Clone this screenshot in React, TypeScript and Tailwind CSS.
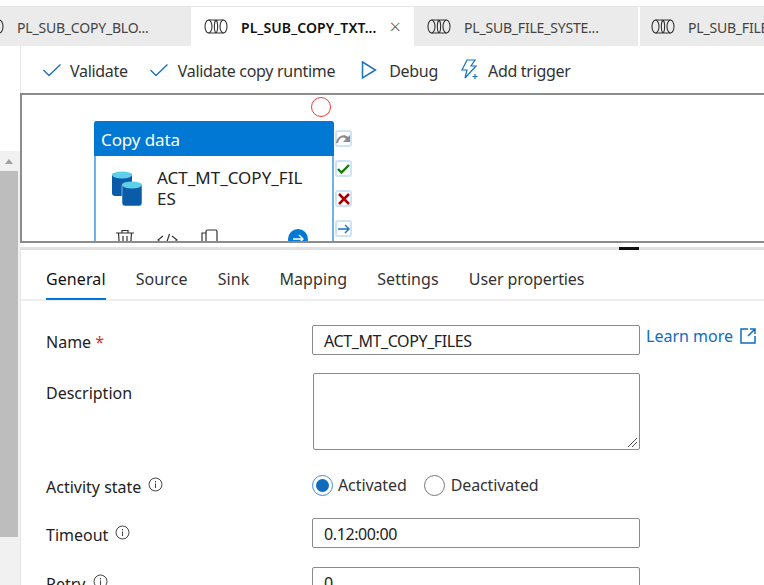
function TabIcon({ className }: { className?: string }) {
  return (
    <svg width="24" height="15" viewBox="0 0 24 15" fill="none" stroke="#333" strokeWidth="1.1" className={`shrink-0 ${className ?? ''}`}>
      <ellipse cx="4.5" cy="7.5" rx="3.500" ry="6.500" />
      <ellipse cx="19.5" cy="7.5" rx="3.500" ry="6.500" />
      <path d="M4.500 1h15M4.500 14h15M12 1c2.200 2 2.200 11 0 13M12 1c-2.200 2-2.200 11 0 13" />
    </svg>
  );
}

function Tab({ label, active, className }: { label: string; active?: boolean; className: string }) {
  return (
    <div className={`flex items-center shrink-0 h-full overflow-hidden ${active ? 'bg-white' : 'bg-[#ebebeb]'} ${className}`}>
      <TabIcon />
      <span className={`ml-[13px] pt-[2px] text-[14px] whitespace-nowrap ${active ? 'text-[#111] font-semibold tracking-[0.1px]' : 'text-[#444] tracking-[-0.2px]'}`}>{label}</span>
      {active && <span className="ml-[13px] text-[#666] text-[20px] leading-none font-light">×</span>}
    </div>
  );
}

function ToolItem({ icon, label, gap }: { icon: React.ReactNode; label: string; gap: string }) {
  return (
    <div className={`flex items-center ${gap}`}>
      {icon}
      <span className="pt-[3px] text-[16px] tracking-[-0.3px] text-[#333] whitespace-nowrap">{label}</span>
    </div>
  );
}

const check = (
  <svg width="18" height="14" viewBox="0 0 18 14" fill="none" stroke="#1a73c0" strokeWidth="1.4" className="shrink-0">
    <path d="M0.500 7l5.500 5.500L17.500 1.500" />
  </svg>
);

function SideBtn({ children }: { children: React.ReactNode }) {
  return (
    <div className="w-[17px] h-[17px] bg-white border-2 border-[#cfe3f7] rounded-[3px] flex items-center justify-center">
      {children}
    </div>
  );
}

function Info() {
  return (
    <svg width="15" height="15" viewBox="0 0 15 15" fill="none" stroke="#444" strokeWidth="1" className="shrink-0 -mt-[6px]">
      <circle cx="7.500" cy="7.500" r="6.500" />
      <path d="M7.500 6.500v4.500M7.500 4v1.400" />
    </svg>
  );
}

function Label({ children, className }: { children: React.ReactNode; className?: string }) {
  return <div className={`w-[266px] shrink-0 flex items-center gap-[7px] text-[16px] text-[#222] ${className ?? ''}`}>{children}</div>;
}

function Input({ value }: { value: string }) {
  return (
    <div className="w-[328px] h-[30px] border border-[#8a8a8a] rounded-[2px] pl-[11px] pt-[2px] flex items-center text-[16px] tracking-[-0.4px] text-[#222] shrink-0">
      {value}
    </div>
  );
}

export default function App() {
  return (
    <div className="w-[764px] h-[585px] overflow-hidden bg-white flex flex-col font-['Noto_Sans',sans-serif]">
      <div className="h-[6px] shrink-0" />
      <div className="h-[40px] flex shrink-0 overflow-hidden border-t border-[#e6e6e6]">
        <div className="w-[191px] h-full bg-[#ebebeb] flex items-center shrink-0 overflow-hidden text-[14px] text-[#444] tracking-[-0.2px]">
          <TabIcon className="-ml-[20px]" />
          <span className="ml-[13px] pt-[2px] whitespace-nowrap">PL_SUB_COPY_BLO...</span>
        </div>
        <Tab label="PL_SUB_COPY_TXT..." active className="w-[223px] pl-[13px]" />
        <Tab label="PL_SUB_FILE_SYSTE..." className="w-[224px] pl-[13px] mr-[2px]" />
        <Tab label="PL_SUB_FILE_SYSTEM" className="w-[124px] pl-[11px]" />
      </div>
      <div className="flex flex-1 min-h-0">
        <div className="w-[20px] shrink-0 flex flex-col">
          <div className="h-[105px] shrink-0" />
          <div className="flex-1 bg-[#f1f1f1] flex flex-col items-start">
            <div className="h-[20px] w-[18px] flex items-center justify-center">
              <div className="w-0 h-0 border-x-[4px] border-x-transparent border-b-[5px] border-b-[#a0a0a0]" />
            </div>
            <div className="w-[18px] h-[366px] bg-[#bdbdbd]" />
          </div>
        </div>
        <div className="flex-1 min-w-0 flex flex-col">
          <div className="h-[47px] shrink-0 flex items-center pl-[22px] border-l border-[#e6e6e6]">
            <ToolItem gap="gap-[9px]" icon={check} label="Validate" />
            <ToolItem gap="gap-[10px] ml-[22px]" icon={check} label="Validate copy runtime" />
            <ToolItem
              gap="gap-[12px] ml-[26px]"
              icon={
                <svg width="16" height="20" viewBox="0 0 16 20" fill="none" stroke="#1a73c0" strokeWidth="1.5" className="shrink-0">
                  <path d="M1.500 2l13 8-13 8z" />
                </svg>
              }
              label="Debug"
            />
            <ToolItem
              gap="gap-[8px] ml-[22px]"
              icon={
                <svg width="20" height="22" viewBox="0 0 20 22" fill="none" stroke="#1a73c0" strokeWidth="1.2" className="shrink-0">
                  <path d="M7 1h8l-4 6h5L5 19l2-8H2z" />
                  <path d="M15 15v5M12.500 17.500h5" />
                </svg>
              }
              label="Add trigger"
            />
          </div>
          <div className="h-[150px] shrink-0 border-y-2 border-l-2 border-[#8c8c8c] relative overflow-hidden">
            <div className="absolute left-[289px] top-[2px] w-[20px] h-[20px] rounded-full border-[1.5px] border-[#f03a3a]" />
            <div className="absolute left-[72px] top-[26px] w-[240px] h-[150px] border-2 border-[#6cb2ec] border-t-0 rounded-t-[3px] bg-white">
              <div className="h-[35px] -mx-[2px] bg-[#0078d4] rounded-t-[3px] text-white text-[17px] tracking-[-0.1px] flex items-center pl-[7px] pt-[2px]">Copy data</div>
              <div className="flex pl-[15px] pt-[15px]">
                <svg width="32" height="36" viewBox="0 0 32 36" className="shrink-0">
                  <rect x="1" y="2" width="20" height="23" rx="3" fill="#0a5ca8" />
                  <ellipse cx="11" cy="4" rx="10" ry="3.500" fill="#5fd0ea" />
                  <rect x="11" y="12" width="20" height="23" rx="3" fill="#0a5ca8" stroke="#fff" strokeWidth="0.500" />
                  <ellipse cx="21" cy="14" rx="10" ry="3.500" fill="#5fd0ea" />
                </svg>
                <div className="ml-[14px] -mt-[4px] w-[150px] text-[17px] leading-[21px] text-[#222] break-all">ACT_MT_COPY_FILES</div>
              </div>
              <div className="flex items-start pl-[19px] pt-[20px] gap-[22px]">
                <svg width="20" height="20" viewBox="0 0 20 20" fill="none" stroke="#333" strokeWidth="1.2" className="shrink-0">
                  <path d="M1 4h18M7 4V1.500h6V4M3.500 4l1 15h11l1-15M8 7v9M12 7v9" />
                </svg>
                <svg width="21" height="16" viewBox="0 0 21 16" fill="none" stroke="#333" strokeWidth="1.2" className="shrink-0 mt-[3px]">
                  <path d="M6 4l-5 4 5 4M15 4l5 4-5 4M12.500 2l-4 12" />
                </svg>
                <svg width="18" height="20" viewBox="0 0 18 20" fill="none" stroke="#333" strokeWidth="1.2" className="shrink-0">
                  <rect x="6" y="1" width="11" height="15" rx="1.500" />
                  <path d="M6 4H2v15h10v-3" />
                </svg>
                <div className="ml-[48px] w-[20px] h-[20px] rounded-full bg-[#0078d4] flex items-center justify-center shrink-0">
                  <svg width="12" height="12" viewBox="0 0 12 12" fill="none" stroke="#fff" strokeWidth="1.400">
                    <path d="M1 6h10M7 2l4 4-4 4" />
                  </svg>
                </div>
              </div>
            </div>
            <div className="absolute left-[313px] top-[35px] flex flex-col gap-[13px]">
              <SideBtn>
                <svg width="15" height="11" viewBox="0 0 15 11" fill="#8a8a8a" className="shrink-0">
                  <path d="M0 10C1 3 8 0 12 4l2-2v7H7l3-3C7 3 3 5 2 10z" />
                </svg>
              </SideBtn>
              <SideBtn>
                <svg width="13" height="10" viewBox="0 0 13 10" fill="none" stroke="#107c10" strokeWidth="2.400" className="shrink-0">
                  <path d="M1 5l3.500 3.500L12 1" />
                </svg>
              </SideBtn>
              <SideBtn>
                <svg width="12" height="12" viewBox="0 0 12 12" fill="none" stroke="#a80000" strokeWidth="2.500" className="shrink-0">
                  <path d="M1 1l10 10M11 1L1 11" />
                </svg>
              </SideBtn>
              <SideBtn>
                <svg width="12" height="10" viewBox="0 0 12 10" fill="none" stroke="#1a73c0" strokeWidth="1.400" className="shrink-0">
                  <path d="M0 5h11M7 1l4 4-4 4" />
                </svg>
              </SideBtn>
            </div>
          </div>
          <div className="h-[7px] shrink-0 relative">
            <div className="absolute left-0 right-0 top-[4px] h-[3px] bg-[#e1e1e1]" />
            <div className="absolute left-[599px] top-[4px] w-[20px] h-[3px] bg-[#111]" />
          </div>
          <div className="border-l border-[#e6e6e6] flex-1 min-h-0 flex flex-col">
            <div className="h-[51px] shrink-0 border-b-2 border-[#eeeeee] flex items-center pl-[25px] pt-[8px] gap-[30px] text-[16px] tracking-[0.1px] text-[#333]">
              <div className="h-full flex items-center relative text-[#111]">
                General
                <div className="absolute left-0 right-0 -bottom-[1px] h-[2px] bg-[#0078d4]" />
              </div>
              <div>Source</div>
              <div>Sink</div>
              <div>Mapping</div>
              <div>Settings</div>
              <div className="tracking-[-0.1px]">User properties</div>
            </div>
            <div className="flex flex-col pl-[25px] pt-[24px]">
              <div className="flex items-center h-[30px]">
                <Label className="pt-[4px]">
                  <span>Name <span className="text-[#d13438]">*</span></span>
                </Label>
                <Input value="ACT_MT_COPY_FILES" />
                <div className="ml-[6px] -mt-[8px] flex items-center gap-[7px] text-[#0f6cbd] text-[16px] whitespace-nowrap">
                  Learn more
                  <svg width="16" height="16" viewBox="0 0 16 16" fill="none" stroke="#0f6cbd" strokeWidth="1.500" className="shrink-0">
                    <path d="M8 1H1v14h14V8M10 1h5v5M15 1L8 8" />
                  </svg>
                </div>
              </div>
              <div className="flex items-start mt-[18px]">
                <Label className="pt-[8px]">Description</Label>
                <div className="w-[327px] h-[77px] ml-[1px] border border-[#8a8a8a] rounded-[2px] relative shrink-0">
                  <svg width="11" height="11" viewBox="0 0 11 11" className="absolute right-[1px] bottom-[1px]" fill="none" stroke="#555" strokeWidth="1">
                    <path d="M10 1L1 10M10 5L5 10" />
                  </svg>
                </div>
              </div>
              <div className="flex items-center mt-[22px] h-[30px]">
                <Label>Activity state <Info /></Label>
                <div className="flex items-center text-[16px] tracking-[-0.1px] text-[#333] -mt-[4px]">
                  <div className="w-[21px] h-[21px] rounded-full border border-[#3a8ddb] flex items-center justify-center">
                    <div className="w-[13px] h-[13px] rounded-full bg-[#0f6cbd]" />
                  </div>
                  <span className="ml-[5px]">Activated</span>
                  <div className="ml-[17px] w-[21px] h-[21px] rounded-full border border-[#777]" />
                  <span className="ml-[6px]">Deactivated</span>
                </div>
              </div>
              <div className="flex items-center mt-[16px] h-[30px]">
                <Label className="pt-[4px]">Timeout <Info /></Label>
                <Input value="0.12:00:00" />
              </div>
              <div className="flex items-center mt-[19px] h-[30px]">
                <Label className="pt-[4px]">Retry <Info /></Label>
                <Input value="0" />
              </div>
            </div>
          </div>
        </div>
      </div>
    </div>
  );
}
